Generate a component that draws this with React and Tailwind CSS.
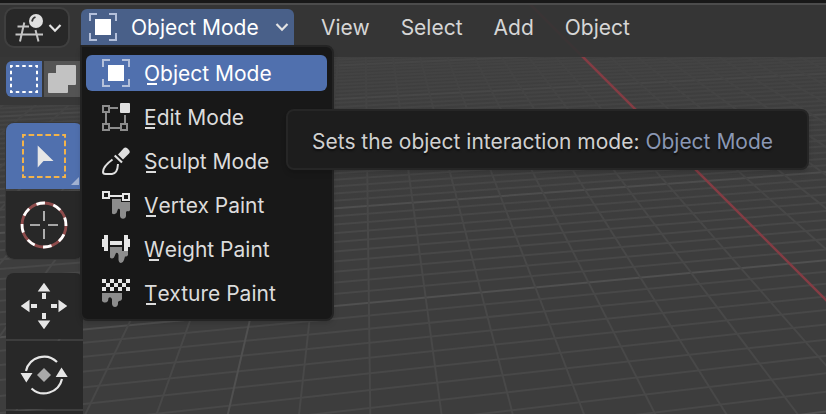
import React from "react";

const HORIZON = -163;
const VANISH_X = 363;

// Floor lines that run away from the viewer; every tenth one is a major line.
const depthLines = Array.from({ length: 61 }, (_, i) => i - 30).filter((k) => k !== 8);
// Floor lines that run across, spaced evenly in 1 / distance.
const crossLines = Array.from({ length: 71 }, (_, i) => i - 20);

function Viewport() {
  return (
    <svg className="absolute inset-0 h-full w-full" aria-hidden="true">
      <defs>
        <linearGradient id="haze" x1="0" y1="50" x2="0" y2="230" gradientUnits="userSpaceOnUse">
          <stop offset="0" stopColor="#404040" stopOpacity="0.7" />
          <stop offset="1" stopColor="#3d3d3d" stopOpacity="0" />
        </linearGradient>
      </defs>
      <rect width="100%" height="100%" fill="#3d3d3d" />
      <g strokeWidth="2">
        {crossLines.map((n) => {
          const y = HORIZON + 1 / (0.002147 + n * 0.0000565);
          const slope = (y - HORIZON) / 5000;
          return (
            <line
              key={n}
              x1={-30}
              y1={y + slope * 400}
              x2={2370}
              y2={y - slope * 2000}
              stroke={n % 10 === 0 ? "#505050" : "#484848"}
            />
          );
        })}
        {depthLines.map((k) => {
          const dx = 7.3 + 71.2 * k;
          return (
            <line
              key={k}
              x1={VANISH_X + dx * 0.28}
              y1={HORIZON + 577 * 0.28}
              x2={VANISH_X + dx * 3}
              y2={HORIZON + 577 * 3}
              stroke={(k + 2) % 10 === 0 ? "#505050" : "#484848"}
            />
          );
        })}
      </g>
      <rect width="100%" height="230" fill="url(#haze)" />
      <line x1="526" y1="0" x2="2526" y2="2000" stroke="#843c44" strokeWidth="2.500" />
    </svg>
  );
}

function Icon({ children, size = 28 }) {
  return (
    <svg width={size} height={size} viewBox={`0 0 ${size} ${size}`} fill="none" className="shrink-0" aria-hidden="true">
      {children}
    </svg>
  );
}

function ObjectIcon() {
  return (
    <Icon>
      <path d="M1 8V1h7M20 1h7v7M27 20v7h-7M8 27H1v-7" stroke="#b4c0da" strokeWidth="2" />
      <rect x="6" y="6" width="16" height="16" fill="#fff" />
    </Icon>
  );
}

function EditIcon() {
  return (
    <Icon>
      <g stroke="#8c8c8c" strokeWidth="2">
        <path d="M8 5h8M4 10v10M8 25h10M23 12v8" />
        <rect x="1" y="3" width="6" height="6" />
        <rect x="1" y="21" width="6" height="6" />
        <rect x="19" y="21" width="6" height="6" />
      </g>
      <rect x="18" width="10" height="10" rx="1" fill="#e0e0e0" />
    </Icon>
  );
}

function SculptIcon() {
  return (
    <Icon>
      <path d="M16 7.5L21.5 1.5Q23 0 25 1L27 3Q28.5 5 27 6.500L21 12.500Z" fill="#e0e0e0" />
      <path d="M12.700 8.500L20 15.500" stroke="#e0e0e0" strokeWidth="2.200" />
      <path d="M10.500 12.500C7 15 1 20.500 1 25Q1 27 3.500 27H10Q15.500 26.500 16 17" stroke="#e0e0e0" strokeWidth="2" />
    </Icon>
  );
}

function VertexIcon() {
  return (
    <Icon>
      <path d="M10 8H19V11H28V19Q27.500 21 25 20L24 21V25Q23.500 27.800 21 27.800T18 25V19Q17.500 17 16 18L14.500 22Q12.500 24 10 22.500Z" fill="#8c8c8c" />
      <g stroke="#e6e6e6" strokeWidth="2">
        <path d="M8 5h12" />
        <rect x="1" y="1" width="6" height="6" />
        <rect x="21" y="3" width="6" height="6" />
      </g>
    </Icon>
  );
}

function WeightIcon() {
  return (
    <Icon>
      <path d="M8 12H20V16H26V20Q25 22 23 21.500L22 25Q21 28 19 28T16.500 25V20Q16 17 14 18L12 22.500Q10 24.500 8 22.500Z" fill="#8c8c8c" />
      <path d="M0 4h2V0h4v16H2v-4H0zM8 6h12v4H8zM22 0h4v4h2v8h-2v4h-4z" fill="#e6e6e6" />
    </Icon>
  );
}

function TextureIcon() {
  return (
    <Icon>
      <path
        d="M0 0h4v4H0zM8 0h4v4H8zM16 0h4v4h-4zM24 0h4v4h-4zM4 4h4v4H4zM12 4h4v4h-4zM20 4h4v4h-4zM0 8h4v4H0zM8 8h4v4H8zM16 8h4v4h-4zM24 8h4v4h-4z"
        fill="#e6e6e6"
      />
      <path d="M0 14H20V20Q19.500 22 17 22L16 23V25Q15.500 28 13 28T10 25V20Q8.500 17 6.500 19L6 22Q4 24.500 1 23L0 22Z" fill="#8c8c8c" />
    </Icon>
  );
}

function SceneIcon() {
  return (
    <Icon>
      <path d="M2.500 12.500H14M0.500 20.500H28M9.300 8.500L5 27.500M20.500 16L23.500 27.500" stroke="#c4c4c4" strokeWidth="2" />
      <circle cx="21" cy="7" r="8" fill="#282828" />
      <circle cx="21" cy="7" r="7" fill="#e0e0e0" />
      <path d="M17 7.500Q17.500 4 20.500 3" stroke="#333" strokeWidth="1.800" />
    </Icon>
  );
}

function Chevron() {
  return (
    <svg width="14" height="10" viewBox="0 0 14 10" fill="none" className="shrink-0" aria-hidden="true">
      <path d="M1.500 2L7 7.700L12.500 2" stroke="#e4e4e4" strokeWidth="2.200" />
    </svg>
  );
}

const modes = [
  { label: "Object Mode", icon: <ObjectIcon /> },
  { label: "Edit Mode", icon: <EditIcon /> },
  { label: "Sculpt Mode", icon: <SculptIcon /> },
  { label: "Vertex Paint", icon: <VertexIcon /> },
  { label: "Weight Paint", icon: <WeightIcon /> },
  { label: "Texture Paint", icon: <TextureIcon /> },
];

function ModeMenu() {
  return (
    <div
      role="menu"
      aria-label="Object interaction mode"
      className="absolute top-9 -left-px z-10 flex w-[254px] flex-col gap-2 rounded-b-lg rounded-tr-lg border-2 border-[#242424] bg-[#181818] py-2 pr-[5px] pl-1 shadow-md"
    >
      {modes.map(({ label, icon }, i) => (
        <button
          key={label}
          role="menuitem"
          className={
            i === 0
              ? "flex h-9 items-center gap-[14px] rounded-md bg-[#5070ae] px-4 text-white"
              : "flex h-9 items-center gap-[14px] rounded-md px-4 text-[#dcdcdc]"
          }
        >
          {icon}
          <span className="pt-[2px] whitespace-nowrap">
            <span className="relative after:absolute after:bottom-px after:left-1/2 after:h-[2px] after:w-[10px] after:-translate-x-1/2 after:bg-current">
              {label[0]}
            </span>
            {label.slice(1)}
          </span>
        </button>
      ))}
    </div>
  );
}

function Header() {
  return (
    <header className="relative z-20 flex h-[57px] items-start border-t-3 border-[#181818] bg-[#343434]/92 pl-[6px]">
      <div className="absolute inset-x-0 top-0 h-[2px] bg-[#4c4c4c]" />
      <div className="flex items-start gap-3 pt-[6px]">
        <button
          aria-label="Editor type"
          className="flex h-[37px] w-[62px] items-center justify-between rounded-lg bg-[#282828] pr-[6px] pl-[9px] outline-2 outline-[#3f3f3f]"
        >
          <SceneIcon />
          <Chevron />
        </button>
        <div className="relative ml-px">
          <button
            aria-haspopup="menu"
            aria-expanded="true"
            className="flex h-9 w-[213px] items-center rounded-t-md bg-[#496089] pr-[5px] pl-2 text-white"
          >
            <ObjectIcon />
            <span className="ml-[14px] flex-1 pt-[2px] text-left whitespace-nowrap">Object Mode</span>
            <Chevron />
          </button>
          <ModeMenu />
          <div
            role="tooltip"
            className="absolute top-[100px] left-[205px] z-20 rounded-lg border-2 border-[#262626] bg-[#1d1d1d] pt-[17px] pr-[34px] pb-3 pl-6 whitespace-nowrap text-[#d0d0d0] shadow-md"
          >
            Sets the object interaction mode: <span className="text-[#8a97b3]">Object Mode</span>
          </div>
        </div>
        <nav className="ml-[15px] flex h-9 items-center gap-[31px] pt-[2px] text-[#d6d6d6]">
          <button>View</button>
          <button>Select</button>
          <button>Add</button>
          <button>Object</button>
        </nav>
      </div>
    </header>
  );
}

function SelectModes() {
  return (
    <div className="flex h-12 w-[200px] items-start gap-[2px] bg-[#363636]/92 pt-1 pl-[6px]">
      <button aria-label="Set selection" className="flex size-9 items-center justify-center rounded-l-md bg-[#5070ae]">
        <Icon>
          <rect x="1" y="1" width="26" height="26" stroke="#fff" strokeWidth="2" strokeDasharray="3.500 3" strokeDashoffset="1.750" />
        </Icon>
      </button>
      <button aria-label="Extend selection" className="flex size-9 items-center justify-center bg-[#545454]">
        <Icon>
          <path d="M9 0H27Q28 0 28 1V19Q28 20 27 20H20V27Q20 28 19 28H1Q0 28 0 27V9Q0 8 1 8H8V1Q8 0 9 0Z" fill="#c2c2c2" />
        </Icon>
      </button>
    </div>
  );
}

function SelectToolIcon() {
  return (
    <Icon size={46}>
      <rect x="2" y="2" width="42" height="42" stroke="#f3b34a" strokeWidth="2" strokeDasharray="5.600 2.800" strokeDashoffset="2.800" />
      <path d="M16.700 12.500V34.500L22.500 28H32.500Z" fill="#e6e6e6" />
    </Icon>
  );
}

function CursorToolIcon() {
  return (
    <Icon size={48}>
      <circle cx="24" cy="24" r="22" stroke="#8f4c4c" strokeWidth="2.800" />
      <circle cx="24" cy="24" r="22" stroke="#fff" strokeWidth="2.800" pathLength="16" strokeDasharray="1 1" transform="rotate(-110 24 24)" />
      <path d="M24 10v10M24 28v10M10 24h10M28 24h10" stroke="#d0d0d0" strokeWidth="1.600" />
    </Icon>
  );
}

function MoveToolIcon() {
  return (
    <Icon size={48}>
      {[0, 90, 180, 270].map((a) => (
        <path key={a} d="M24 0.700L30.300 9.500H17.700ZM22 11H26V17H22Z" fill="#e6e6e6" transform={`rotate(${a} 24 24)`} />
      ))}
    </Icon>
  );
}

function RotateToolIcon() {
  return (
    <Icon size={48}>
      <path d="M6 20A18.500 18.500 0 0 1 37 11M42 28A18.500 18.500 0 0 1 11.500 37.500" stroke="#e6e6e6" strokeWidth="2.200" />
      <path d="M0.500 22H12.500L6.300 31.500ZM35.700 26H47.700L41.500 16.500Z" fill="#e6e6e6" />
      <path d="M24 17L31 24L24 31L17 24Z" fill="#a9a9a9" />
    </Icon>
  );
}

function Toolbar() {
  return (
    <aside className="flex w-[85px] flex-col gap-[14px] pt-[18px] pl-[6px]">
      <div className="flex w-[77px] flex-col gap-[2px] overflow-hidden rounded-lg outline-1 outline-[#383838]">
        <button aria-label="Select box" className="relative flex h-[66px] items-center justify-center bg-[#5070ae] pr-px">
          <SelectToolIcon />
          <svg className="absolute right-1 bottom-1" width="8" height="8" aria-hidden="true">
            <path d="M8 0V8H0Z" fill="#a3b3d3" />
          </svg>
        </button>
        <button aria-label="Cursor" className="flex h-[68px] items-center justify-center bg-[#282828] pr-px">
          <CursorToolIcon />
        </button>
      </div>
      <div className="flex w-[77px] flex-col gap-[2px] overflow-hidden rounded-t-lg">
        <button aria-label="Move" className="flex h-[66px] items-center justify-center bg-[#282828] pr-px">
          <MoveToolIcon />
        </button>
        <button aria-label="Rotate" className="flex h-[68px] items-center justify-center bg-[#282828] pr-px">
          <RotateToolIcon />
        </button>
        <button aria-label="Scale" className="h-[66px] bg-[#282828]" />
      </div>
    </aside>
  );
}

export default function App() {
  return (
    <div className="relative h-screen overflow-hidden bg-[#3d3d3d] font-['Inter','Liberation_Sans',sans-serif] text-[21px] leading-7 text-shadow-[0_2px_2px_rgba(0,0,0,0.5)]">
      <Viewport />
      <Header />
      <main className="relative">
        <SelectModes />
        <Toolbar />
      </main>
    </div>
  );
}
